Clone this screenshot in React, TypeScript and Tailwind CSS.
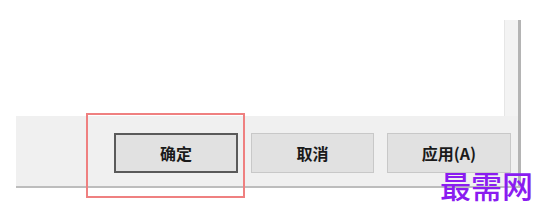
export default function App() {
  const font = { fontFamily: '"Noto Sans CJK SC", "Noto Sans", sans-serif' };
  return (
    <div className="relative w-[549px] h-[220px] bg-white" style={font}>
      <div className="ml-[16px] w-[505px] flex flex-col">
        {/* top: white tab page + right strip */}
        <div className="flex h-[116px]">
          <div className="flex-1 bg-white" />
          <div className="w-[17px] flex flex-col">
            <div className="h-[20px] bg-white" />
            <div className="flex-1 flex">
              <div className="flex-1 bg-[#f3f3f3] border-l border-[#e6e6e6]" />
              <div className="w-[3px] bg-[#b4b4b4]" />
            </div>
          </div>
        </div>
        {/* bottom button bar */}
        <div className="flex h-[70px]">
          <div className="flex-1 bg-[#f0f0f0] flex items-start pt-[17px] pl-[98px] gap-[13px]">
            <button className="w-[124px] h-[40px] bg-[#e1e1e1] border-2 border-[#5a5a5a] text-[16px] font-semibold text-[#1a1a1a]">
              确定
            </button>
            <button className="w-[123px] h-[40px] bg-[#e1e1e1] border border-[#c8c8c8] text-[16px] font-semibold text-[#1a1a1a]">
              取消
            </button>
            <button className="w-[124px] h-[40px] bg-[#e1e1e1] border border-[#c8c8c8] text-[16px] font-semibold text-[#1a1a1a]">
              应用(A)
            </button>
          </div>
          <div className="w-[3px] bg-[#b4b4b4]" />
        </div>
        <div className="h-[2px] bg-[#bdbdbd]" />
      </div>

      {/* red highlight */}
      <div className="absolute left-[86px] top-[113px] w-[159px] h-[85px] border-2 border-[#ef8080]" />

      {/* watermark */}
      <div className="absolute left-[440px] top-[167px] text-[31px] leading-[36px] font-medium text-[#8a1cf0]">
        最需网
      </div>
    </div>
  );
}
